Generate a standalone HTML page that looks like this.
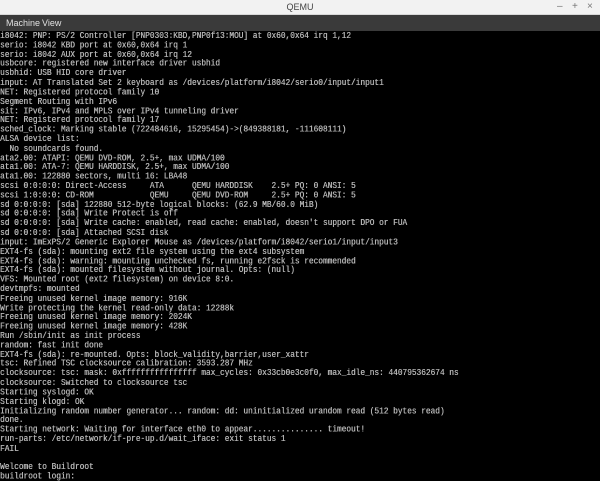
<!DOCTYPE html>
<html><head><style>
html,body{margin:0;padding:0;width:600px;height:481px;overflow:hidden;background:#000}
#title{position:absolute;left:0;top:0;width:600px;height:15px;background:#f2f2f2;border-bottom:1px solid #d8d8d8;box-sizing:border-box;font:9px "Liberation Sans",sans-serif;color:#444}
#title .t{position:absolute;left:0;width:600px;text-align:center;top:2px}
#title .c{position:absolute;top:1px;font-size:10px;color:#777}
#menu{position:absolute;left:0;top:15px;width:600px;height:16px;background:#3a3a3a;font:9px "Liberation Sans",sans-serif;color:#e0e0e0}
#menu span{position:absolute;top:3px}
#con{position:absolute;left:0;top:31px;width:600px;height:450px;overflow:hidden}
pre{margin:0;position:relative;top:0.6px;font-family:"Liberation Mono",monospace;font-size:7.8125px;line-height:7.8125px;color:#b4b4b4;transform:scaleY(1.2);transform-origin:0 0;white-space:pre;text-shadow:0.3px 0 0 #b4b4b4}
</style></head><body>
<div id="title"><div class="t">QEMU</div><span class="c" style="left:557px">–</span><span class="c" style="left:572px">+</span><span class="c" style="left:587px">×</span></div>
<div id="menu"><span style="left:6px">Machine</span><span style="left:42px">View</span></div>
<div id="con"><pre>i8042: PNP: PS/2 Controller [PNP0303:KBD,PNP0f13:MOU] at 0x60,0x64 irq 1,12
serio: i8042 KBD port at 0x60,0x64 irq 1
serio: i8042 AUX port at 0x60,0x64 irq 12
usbcore: registered new interface driver usbhid
usbhid: USB HID core driver
input: AT Translated Set 2 keyboard as /devices/platform/i8042/serio0/input/input1
NET: Registered protocol family 10
Segment Routing with IPv6
sit: IPv6, IPv4 and MPLS over IPv4 tunneling driver
NET: Registered protocol family 17
sched_clock: Marking stable (722484616, 15295454)->(849388181, -111608111)
ALSA device list:
  No soundcards found.
ata2.00: ATAPI: QEMU DVD-ROM, 2.5+, max UDMA/100
ata1.00: ATA-7: QEMU HARDDISK, 2.5+, max UDMA/100
ata1.00: 122880 sectors, multi 16: LBA48
scsi 0:0:0:0: Direct-Access     ATA      QEMU HARDDISK    2.5+ PQ: 0 ANSI: 5
scsi 1:0:0:0: CD-ROM            QEMU     QEMU DVD-ROM     2.5+ PQ: 0 ANSI: 5
sd 0:0:0:0: [sda] 122880 512-byte logical blocks: (62.9 MB/60.0 MiB)
sd 0:0:0:0: [sda] Write Protect is off
sd 0:0:0:0: [sda] Write cache: enabled, read cache: enabled, doesn't support DPO or FUA
sd 0:0:0:0: [sda] Attached SCSI disk
input: ImExPS/2 Generic Explorer Mouse as /devices/platform/i8042/serio1/input/input3
EXT4-fs (sda): mounting ext2 file system using the ext4 subsystem
EXT4-fs (sda): warning: mounting unchecked fs, running e2fsck is recommended
EXT4-fs (sda): mounted filesystem without journal. Opts: (null)
VFS: Mounted root (ext2 filesystem) on device 8:0.
devtmpfs: mounted
Freeing unused kernel image memory: 916K
Write protecting the kernel read-only data: 12288k
Freeing unused kernel image memory: 2024K
Freeing unused kernel image memory: 428K
Run /sbin/init as init process
random: fast init done
EXT4-fs (sda): re-mounted. Opts: block_validity,barrier,user_xattr
tsc: Refined TSC clocksource calibration: 3593.287 MHz
clocksource: tsc: mask: 0xffffffffffffffff max_cycles: 0x33cb0e3c0f0, max_idle_ns: 440795362674 ns
clocksource: Switched to clocksource tsc
Starting syslogd: OK
Starting klogd: OK
Initializing random number generator... random: dd: uninitialized urandom read (512 bytes read)
done.
Starting network: Waiting for interface eth0 to appear............... timeout!
run-parts: /etc/network/if-pre-up.d/wait_iface: exit status 1
FAIL

Welcome to Buildroot
buildroot login: </pre></div>
</body></html>
